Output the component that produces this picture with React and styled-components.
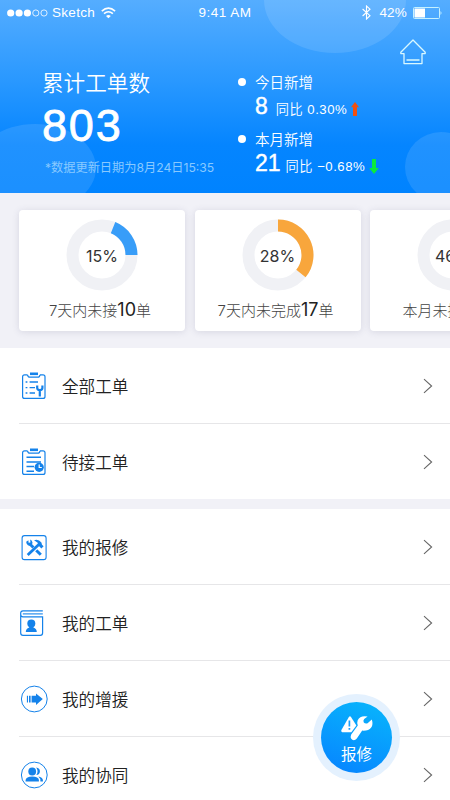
import React from "react";
import styled, { createGlobalStyle } from "styled-components";

const stats = [
  { id: 1, percent: "15%", from: 22, to: 90, color: "#389df8", label: "7天内未接", count: "10" },
  { id: 2, percent: "28%", from: 0, to: 129, color: "#f8a63c", label: "7天内未完成", count: "17" },
  { id: 3, percent: "46%", from: 15, to: 165, color: "#389df8", label: "本月未接", count: "28" },
];

const orderMenu = [
  { id: "all", name: "全部工单", icon: <AllIcon /> },
  { id: "wait", name: "待接工单", icon: <WaitIcon /> },
];

const myMenu = [
  { id: "repair", name: "我的报修", icon: <ToolsIcon /> },
  { id: "order", name: "我的工单", icon: <BookIcon /> },
  { id: "support", name: "我的增援", icon: <ArrowIcon /> },
  { id: "team", name: "我的协同", icon: <TeamIcon /> },
];

export default function App() {
  return (
    <>
      <GlobalStyle />
      <Page>
        <Header>
          <Bubble $x={264} $y={-53} $w={142} $h={106} />
          <Bubble $x={-26} $y={124} $w={122} $h={88} />
          <Bubble $x={405} $y={132} $w={72} $h={70} />
          <StatusBar />
          <Summary />
        </Header>
        <CardList>
          {stats.map((item) => (
            <StatCard key={item.id} item={item} />
          ))}
        </CardList>
        <Menu items={orderMenu} />
        <Menu items={myMenu} />
        <RepairButton>
          <RepairInner>
            <RepairIcon />
            <RepairText>报修</RepairText>
          </RepairInner>
        </RepairButton>
      </Page>
    </>
  );
}

function StatusBar() {
  return (
    <StatusWrap>
      <StatusLeft>
        <svg width="41" height="8" viewBox="0 0 41 8" fill="#fff">
          <circle cx="3.7" cy="4" r="3.6" />
          <circle cx="12.1" cy="4" r="3.6" />
          <circle cx="20.4" cy="4" r="3.6" />
          <g fill="none" stroke="#fff" strokeWidth="0.8">
            <circle cx="28.8" cy="4" r="3.1" />
            <circle cx="37" cy="4" r="3.1" />
          </g>
        </svg>
        <Carrier>Sketch</Carrier>
        <svg width="15" height="12" viewBox="0 0 15 12" fill="none" stroke="#fff" strokeWidth="1.6">
          <path d="M0.8 4.1Q7.4 -1.8 14.1 4.1M3 6.7Q7.4 2.8 11.9 6.7" />
          <path d="M5 9Q7.4 7 9.8 9L7.4 11.3Z" fill="#fff" stroke="none" />
        </svg>
      </StatusLeft>
      <Clock>9:41 AM</Clock>
      <StatusRight>
        <svg width="9" height="15" viewBox="0 0 9 15" fill="none" stroke="#fff" strokeWidth="1.1">
          <path d="M0.6 4L8 10.7L4.5 14V1L8 4.2L0.6 11" />
        </svg>
        <Battery>42%</Battery>
        <svg width="30" height="12" viewBox="0 0 30 12">
          <rect x="0.5" y="0.5" width="26" height="11" rx="1" fill="none" stroke="#c5f1ff" />
          <rect x="1.5" y="1.5" width="10.5" height="9" fill="#fff" />
          <path d="M27.5 4Q29.5 6 27.5 8Z" fill="#c5f1ff" />
        </svg>
      </StatusRight>
    </StatusWrap>
  );
}

function Summary() {
  return (
    <SummaryWrap>
      <Total>
        <TotalTitle>累计工单数</TotalTitle>
        <TotalNumber>803</TotalNumber>
        <UpdateText>*数据更新日期为8月24日15:35</UpdateText>
      </Total>
      <Increase>
        <IncreaseTitle>今日新增</IncreaseTitle>
        <IncreaseRow>
          <IncreaseNumber>8</IncreaseNumber>
          <Compare>同比 0.30%</Compare>
          <TrendIcon width="8" height="16" viewBox="0 0 8 16">
            <path d="M4 0L8 5.3H6V14H2V5.3H0Z" fill="#f1500f" />
          </TrendIcon>
        </IncreaseRow>
        <IncreaseTitle>本月新增</IncreaseTitle>
        <IncreaseRow>
          <IncreaseNumber>21</IncreaseNumber>
          <Compare $tight>同比 −0.68%</Compare>
          <TrendIcon width="10" height="16" viewBox="0 0 10 16">
            <path d="M3 0H7V9H9.8L5 15L0.2 9H3Z" fill="#0bea3d" />
          </TrendIcon>
        </IncreaseRow>
      </Increase>
      <HomeButton>
        <svg width="26" height="26" viewBox="0 0 26 26" fill="none" stroke="#d9f8ff" strokeWidth="1.3" strokeLinejoin="round">
          <path d="M13 1L25.2 13.2V14.6H22V24.6H4V14.6H0.8V13.2Z" />
          <path d="M6.5 21H19.5" strokeWidth="1.5" />
        </svg>
      </HomeButton>
    </SummaryWrap>
  );
}

function point(angle) {
  const rad = ((angle - 90) * Math.PI) / 180;
  return `${36 + 29.5 * Math.cos(rad)} ${36 + 29.5 * Math.sin(rad)}`;
}

function StatCard({ item }) {
  const large = item.to - item.from > 180 ? 1 : 0;
  return (
    <Card>
      <Donut>
        <svg width="72" height="72" viewBox="0 0 72 72" fill="none" strokeWidth="12">
          <circle cx="36" cy="36" r="29.5" stroke="#f0f1f5" />
          <path d={`M${point(item.from)}A29.5 29.5 0 ${large} 1 ${point(item.to)}`} stroke={item.color} />
        </svg>
        <Percent>{item.percent}</Percent>
      </Donut>
      <CardText>
        {item.label}
        <strong>{item.count}</strong>单
      </CardText>
    </Card>
  );
}

function Menu({ items }) {
  return (
    <MenuList>
      {items.map((item) => (
        <MenuItem key={item.id}>
          <IconBox>{item.icon}</IconBox>
          <MenuName>{item.name}</MenuName>
          <svg width="10" height="16" viewBox="0 0 10 16" fill="none" stroke="#666" strokeWidth="1.1">
            <path d="M1 1.2L8.6 8L1 14.8" />
          </svg>
        </MenuItem>
      ))}
    </MenuList>
  );
}

function AllIcon() {
  return (
    <svg width="28" height="28" viewBox="0 0 28 28" fill="none" stroke="#1482ea" strokeWidth="1.2">
      <path d="M7.5 2.8H4.6Q2.6 2.8 2.6 4.8V24.4Q2.6 26.4 4.6 26.4H23Q25 26.4 25 24.4V4.8Q25 2.8 23 2.8H20" />
      <path d="M7.5 2.8Q8 5.2 10 5.2H17.8Q19.6 5.2 20 2.8" />
      <path d="M10 1.8H18" strokeWidth="2.6" />
      <path d="M5.6 10H7.4M9.6 10H18M5.6 15.6H7.4M9.6 15.6H15M5.6 21H7.4M9.6 21H15" strokeWidth="1.4" />
      <path d="M17.2 13.6V16Q17.2 18 19.8 18.2Q22.4 18 22.4 16V13.6M19.8 18V24.5" strokeWidth="2.2" />
    </svg>
  );
}

function WaitIcon() {
  return (
    <svg width="28" height="28" viewBox="0 0 28 28" fill="none" stroke="#1482ea" strokeWidth="1.2">
      <path d="M7.5 2.8H4.6Q2.6 2.8 2.6 4.8V24.4Q2.6 26.4 4.6 26.4H23Q25 26.4 25 24.4V4.8Q25 2.8 23 2.8H20" />
      <path d="M7.5 2.8Q8 5.2 10 5.2H17.8Q19.6 5.2 20 2.8" />
      <path d="M10 1.8H18" strokeWidth="2.6" />
      <path d="M6.5 9.2H21M6.5 14H21M6.5 18.6H14M6.5 23.2H14" strokeWidth="1.5" />
      <circle cx="19.2" cy="19.3" r="4.6" fill="#1482ea" stroke="none" />
      <path d="M19.2 16.6V19.5H21.8" stroke="#fff" />
    </svg>
  );
}

function ToolsIcon() {
  return (
    <svg width="28" height="28" viewBox="0 0 28 28" fill="none" stroke="#1482ea">
      <rect x="2.1" y="2.6" width="24" height="24" rx="2.4" strokeWidth="1.1" />
      <path d="M9.8 11L20.8 21.8" strokeWidth="3" />
      <path d="M8.4 7.2L6.2 8.8Q6.4 12 9.2 12.8L12 11.8L12.5 9.5Q11.9 7.2 10.2 6.5L10.4 9.4L8.6 9.8Z" fill="#1482ea" stroke="none" />
      <path d="M19 12L8 22.2" stroke="#fff" strokeWidth="4" />
      <path d="M18.8 11.5L7.7 22" strokeWidth="2.8" />
      <path d="M14 7.2Q18.5 5.8 21.4 9.5L22 11.8L23.6 13.2L21.4 15.5L18.2 12.2L17.7 9.8Z" fill="#1482ea" stroke="none" />
    </svg>
  );
}

function BookIcon() {
  return (
    <svg width="28" height="28" viewBox="0 0 28 28" fill="none" stroke="#1482ea" strokeWidth="1.2">
      <path d="M22.8 1.9H3Q0.7 1.9 0.7 4.2V24Q0.7 26.4 3 26.4H20.2Q22.6 26.4 22.6 24V7.8H3Q0.7 7.8 0.7 5" />
      <path d="M2.8 4.9H22.8" strokeWidth="1.1" />
      <g fill="#1482ea" stroke="none">
        <circle cx="11.3" cy="14.4" r="4" />
        <path d="M9.2 16H13.4V18.6Q16.8 19.8 16.8 23H5.8Q5.8 19.8 9.2 18.6Z" />
      </g>
    </svg>
  );
}

function ArrowIcon() {
  return (
    <svg width="28" height="28" viewBox="0 0 28 28" fill="#1482ea">
      <circle cx="14.3" cy="14" r="12.9" fill="none" stroke="#1482ea" strokeWidth="1" />
      <path d="M6.9 10.7H8V17.5H6.9ZM9 10.7H10.6V17.5H9ZM11.6 10.7H16V8.4L22.8 14L16 19.9V17.5H11.6Z" />
    </svg>
  );
}

function TeamIcon() {
  return (
    <svg width="28" height="28" viewBox="0 0 28 28" fill="#1482ea">
      <circle cx="14.3" cy="14" r="12.9" fill="none" stroke="#1482ea" strokeWidth="1" />
      <ellipse cx="12.2" cy="10.4" rx="3.9" ry="4" />
      <path d="M5.6 20.4V19Q6.2 15.6 12.2 15.5Q18.6 15.6 18.9 19V20.4Z" />
      <path d="M16.2 6.4Q19.9 6.9 19.9 10.2Q19.9 13.5 16.3 14.1Q18.9 10.3 16.2 6.4ZM18.3 15.6Q22.5 16.2 22.9 19V20.4H20.4Q20.5 17.2 18.3 15.6Z" />
    </svg>
  );
}

function RepairIcon() {
  return (
    <svg width="34" height="28" viewBox="0 0 34 28">
      <path
        d="M27.6 2.6Q20.2 1.2 17.7 6.2Q16.8 8.4 17.8 11.4L11.2 20.5Q9.7 24.2 12.3 25.8Q14.8 27 16.8 24.4L22.2 16.6Q28.5 17 31.2 13.4Q33.4 10.4 31.8 5.4L27.6 9.2Q25.2 9.9 23.8 8.4Q22.8 6.6 24.2 5Z"
        fill="#fff"
      />
      <path d="M8.9 2.9Q10 1.5 11 3L16.4 11.4L11.3 18.2H2.2Q0.6 17.6 1.4 16.1Z" fill="#fff" />
      <path d="M9.4 6.6V12.4M9.4 14V15.8" stroke="#189fff" strokeWidth="1.7" />
    </svg>
  );
}

const GlobalStyle = createGlobalStyle`
  * {
    box-sizing: border-box;
  }
  body {
    margin: 0;
    overflow: hidden;
    font-family: "Liberation Sans", "Noto Sans CJK SC", sans-serif;
  }
`;

const Page = styled.div`
  position: relative;
  width: 450px;
  height: 800px;
  overflow: hidden;
  display: flex;
  flex-direction: column;
  background-color: #f1f1f7;
`;

const Header = styled.header`
  position: relative;
  flex: none;
  height: 193px;
  overflow: hidden;
  color: #fff;
  background: linear-gradient(#55adff 0%, #2998ff 42%, #0585ff 75%, #0083ff 100%);
`;

const Bubble = styled.div`
  position: absolute;
  left: ${(props) => props.$x}px;
  top: ${(props) => props.$y}px;
  width: ${(props) => props.$w}px;
  height: ${(props) => props.$h}px;
  border-radius: 50%;
  background-color: rgba(255, 255, 255, 0.11);
`;

const StatusWrap = styled.div`
  position: relative;
  height: 25px;
  padding: 0 7px;
  display: grid;
  grid-template-columns: 1fr auto 1fr;
  align-items: center;
  font-size: 13.5px;
  line-height: 25px;
`;

const StatusLeft = styled.div`
  display: flex;
  align-items: center;
`;

const Carrier = styled.span`
  margin: 0 6px 0 4px;
  letter-spacing: 0.3px;
`;

const Clock = styled.span`
  font-size: 13.5px;
  letter-spacing: 0.5px;
`;

const StatusRight = styled.div`
  display: flex;
  align-items: center;
  justify-content: flex-end;
`;

const Battery = styled.span`
  margin: 0 6px 0 8px;
  letter-spacing: 0.2px;
`;

const SummaryWrap = styled.div`
  position: relative;
  height: 168px;
  display: flex;
  padding-left: 42px;
`;

const Total = styled.div`
  width: 196px;
  padding-top: 42px;
`;

const TotalTitle = styled.p`
  margin: 0;
  font-size: 21.6px;
  line-height: 30px;
  font-weight: 350;
  font-family: "Noto Sans CJK SC", sans-serif;
`;

const TotalNumber = styled.p`
  margin: 6px 0 0;
  font-family: "Liberation Sans", sans-serif;
  font-size: 45px;
  line-height: 46px;
  letter-spacing: 1.8px;
  -webkit-text-stroke: 0.8px #fff;
`;

const UpdateText = styled.p`
  margin: 9px 0 0 3px;
  font-family: Inter, "Noto Sans CJK SC", sans-serif;
  font-size: 12.2px;
  line-height: 20px;
  white-space: nowrap;
  color: #88c9ff;
`;

const Increase = styled.div`
  width: 162px;
  padding-top: 46px;
`;

const IncreaseTitle = styled.div`
  display: flex;
  align-items: center;
  font-size: 14.5px;
  line-height: 22px;
  font-weight: 350;
  font-family: "Noto Sans CJK SC", sans-serif;

  &::before {
    content: "";
    width: 8px;
    height: 8px;
    margin-right: 9px;
    border-radius: 50%;
    background-color: #fff;
  }
`;

const IncreaseRow = styled.div`
  display: flex;
  align-items: center;
  height: 35px;
  padding: 0 0 9px 17px;
`;

const IncreaseNumber = styled.span`
  font-family: "Liberation Sans", sans-serif;
  font-size: 23px;
  -webkit-text-stroke: 0.4px #fff;
`;

const Compare = styled.span`
  margin: 7px 4px 0 ${(props) => (props.$tight ? 5 : 8)}px;
  font-family: "Liberation Sans", "Noto Sans CJK SC", sans-serif;
  font-size: 13.2px;
  font-weight: 350;
  line-height: 20px;
  letter-spacing: 0.5px;
  white-space: nowrap;
`;

const TrendIcon = styled.svg`
  flex: none;
  margin-top: 7px;
`;

const HomeButton = styled.div`
  padding-top: 14px;
`;

const CardList = styled.section`
  flex: none;
  height: 155px;
  padding: 17px 0 0 19px;
  display: flex;
  gap: 9.5px;
`;

const Card = styled.div`
  flex: none;
  width: 166px;
  height: 121px;
  padding-top: 9px;
  display: flex;
  flex-direction: column;
  align-items: center;
  border-radius: 4px;
  background-color: #fff;
  box-shadow: 0 1px 7px rgba(70, 70, 110, 0.15);
`;

const Donut = styled.div`
  display: grid;
  place-items: center;

  > * {
    grid-area: 1 / 1;
  }
`;

const Percent = styled.span`
  padding-top: 1px;
  font-family: Inter, sans-serif;
  font-size: 16px;
  line-height: 20px;
  color: #333;
`;

const CardText = styled.p`
  margin: 6px 4px 0 0;
  font-family: Inter, "Noto Sans CJK SC", sans-serif;
  font-size: 15px;
  line-height: 26px;
  font-weight: 300;
  color: #444;
  white-space: nowrap;

  strong {
    font-size: 18px;
    font-weight: 400;
    color: #222;
  }
`;

const MenuList = styled.ul`
  flex: none;
  margin: 0 0 10px;
  padding: 0;
  list-style: none;
  background-color: #fff;
`;

const MenuItem = styled.li`
  display: flex;
  align-items: center;
  height: 76px;
  margin-left: 19px;
  padding-right: 17px;
  border-bottom: 1px solid #e6e6e8;

  &:last-child {
    height: 75px;
    border-bottom: 0;
  }
`;

const IconBox = styled.span`
  display: flex;
  width: 43px;
  padding-left: 1px;
`;

const MenuName = styled.span`
  flex: 1;
  font-family: "Noto Sans CJK SC", sans-serif;
  font-size: 16.6px;
  font-weight: 350;
  line-height: 24px;
  color: #222;
`;

const RepairButton = styled.button`
  position: absolute;
  left: 313px;
  top: 694px;
  width: 87px;
  height: 87px;
  padding: 8px;
  border: 0;
  border-radius: 50%;
  background-color: #e4f1fe;
`;

const RepairInner = styled.span`
  display: flex;
  flex-direction: column;
  align-items: center;
  width: 71px;
  height: 71px;
  padding-top: 12px;
  border-radius: 50%;
  color: #fff;
  background: linear-gradient(200deg, #08b2fc 10%, #0785ff 95%);
`;

const RepairText = styled.span`
  font-family: "Noto Sans CJK SC", sans-serif;
  font-size: 15.5px;
  line-height: 22px;
`;
